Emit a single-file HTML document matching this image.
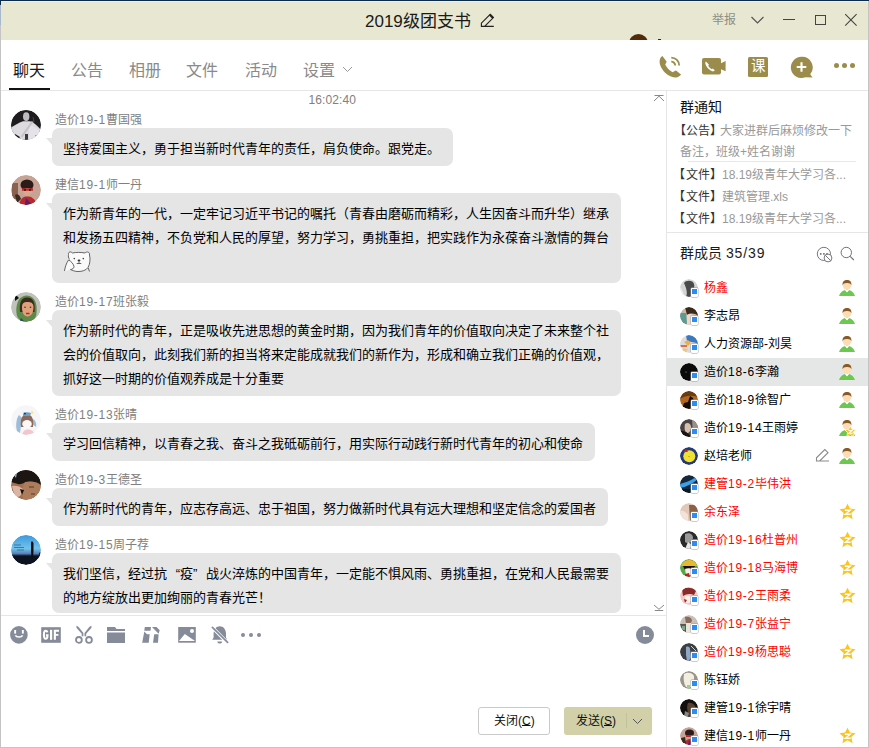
<!DOCTYPE html>
<html lang="zh-CN"><head><meta charset="utf-8">
<style>
*{margin:0;padding:0;box-sizing:border-box}
html,body{width:869px;height:748px;overflow:hidden;background:#c4c4c4}
body{font-family:"Liberation Sans",sans-serif;position:relative;color:#000}
.a{position:absolute}
.t{position:absolute;white-space:nowrap;line-height:1}
.tab{position:absolute;top:62.5px;font-size:16px;color:#8a8a8a;line-height:1;white-space:nowrap}
.bub{position:absolute;left:52px;background:#e5e5e5;border-radius:7px}
.tail{position:absolute;left:46px;width:7px;height:8px;background:#e5e5e5;clip-path:polygon(0 0,100% 0,100% 100%)}
.ln{position:absolute;left:63px;font-size:13px;line-height:1;white-space:nowrap;color:#000}
.nm{position:absolute;margin-top:.5px;left:55px;font-size:12px;color:#808080;line-height:1;white-space:nowrap}
.av{position:absolute;left:11px;width:30px;height:30px;border-radius:50%;overflow:hidden}
.mrow{position:absolute;left:667px;width:201px;height:28px}
.mav{position:absolute;left:13px;top:5px;width:18px;height:18px;border-radius:50%;overflow:hidden}
.mnm{position:absolute;left:37px;top:8.4px;font-size:12px;line-height:1;color:#000;white-space:nowrap}
.red{color:#f00}
.badge{position:absolute;left:24px;top:13.5px;width:7px;height:9px;background:#fff;border-radius:1px;box-shadow:0 0 0 .4px #999}
.badge:after{content:"";position:absolute;left:1px;top:1px;width:4.6px;height:5.6px;background:#2a8cf4}
.ico{position:absolute}
.br{color:#333}
.d{letter-spacing:.75px}
</style></head><body>
<div class="a" style="left:0;top:0;width:869px;height:1px;background:#0b2c4e"></div>
<div class="a" style="left:1px;top:1px;width:867px;height:746px;background:#fff"></div>
<!-- title bar -->
<div class="a" style="left:1px;top:1px;width:867px;height:39px;background:#e8e8d2;border-top-right-radius:3px"></div>
<div class="a" style="left:1px;top:1px;width:865px;height:1px;background:#f3f1da"></div>
<div class="a" style="left:0;top:1px;width:1px;height:4px;background:#10304a"></div><div class="a" style="left:0;top:5px;width:1px;height:20px;background:#a8b8cc"></div>
<div class="t" style="left:365px;top:13px;font-size:17px;color:#1a1a1a">2019级团支书</div>
<svg class="ico" style="left:476px;top:10px" width="24" height="22" viewBox="0 0 24 22"><path d="M5.4 16.4 V13.2 L14.2 4.4 L17.4 7.6 L8.6 16.4 Z M5.4 16.4 H17.8" fill="none" stroke="#222" stroke-width="1.15"/><path d="M13.8 4.8 L17 8" stroke="#222" stroke-width="2"/></svg>
<div class="t" style="left:712px;top:14px;font-size:12px;color:#8e8d83">举报</div>
<svg class="ico" style="left:750px;top:15px" width="15" height="10" viewBox="0 0 15 10"><path d="M1.5 2 L7.5 8 L13.5 2" fill="none" stroke="#555" stroke-width="1.2"/></svg>
<div class="a" style="left:783px;top:19px;width:12px;height:1px;background:#444"></div>
<div class="a" style="left:815px;top:15px;width:11px;height:10px;border:1.2px solid #444"></div>
<svg class="ico" style="left:844px;top:13px" width="14" height="14" viewBox="0 0 14 14"><path d="M1.2 1.2 L12.6 12.6 M12.6 1.2 L1.2 12.6" stroke="#444" stroke-width="1.1"/></svg>
<div class="a" style="left:629px;top:34px;width:19px;height:6px;overflow:hidden"><div style="width:19px;height:19px;border-radius:50%;background:#532a0a"></div></div>
<div class="a" style="left:658px;top:38.5px;width:2.5px;height:1.5px;background:#3a2a1a"></div>

<!-- tabs -->
<div class="tab" style="left:13px;color:#1a1a1a">聊天</div>
<div class="a" style="left:9px;top:88px;width:41px;height:2px;background:#111"></div>
<div class="tab" style="left:71px">公告</div>
<div class="tab" style="left:129px">相册</div>
<div class="tab" style="left:186px">文件</div>
<div class="tab" style="left:245px">活动</div>
<div class="tab" style="left:303px">设置</div>
<svg class="ico" style="left:342px;top:66px" width="11" height="7" viewBox="0 0 11 7"><path d="M1 1 L5.5 5.5 L10 1" fill="none" stroke="#999" stroke-width="1"/></svg>

<!-- tab icons -->
<svg class="ico" style="left:655px;top:52px" width="30" height="30" viewBox="0 0 30 30"><path d="M7.4 4 C5.4 5 4.4 7.5 4.6 10.5 C5.2 15 8.5 20 13 23 C16 25 19 25.8 21.5 25.4 C23.5 25 25.2 24 26 22.6 L21 18.6 C20 18.8 18.8 19.8 17.6 20.2 C14.6 18.8 11.6 15.8 10.2 12.6 C10.8 11.6 11.5 10.6 11.6 9.6 Z" fill="#9b8c4c"/><path d="M16.3 9.6 A3.9 3.9 0 0 1 20.2 13.5 M16.3 5.6 A7.9 7.9 0 0 1 24.2 13.5" fill="none" stroke="#9b8c4c" stroke-width="1.8"/></svg>
<svg class="ico" style="left:702px;top:58px" width="24" height="17" viewBox="0 0 24 17"><rect x="0" y="0" width="19" height="16.6" rx="2" fill="#9b8c4c"/><path d="M18.5 5.5 L23.6 3 V13.3 L18.5 11 Z" fill="#9b8c4c"/><path d="M4 3.6 C3 4.3 3 5.6 4 7.5 C5.5 10.3 7.6 12.3 10.2 13.3 C11.2 13.7 12.2 13.3 12.8 12.3 L10.8 10.6 L9.8 11.3 C8.3 10.6 7 9.3 6.2 7.8 L7 6.8 Z" fill="#fff"/></svg>
<div class="a" style="left:748px;top:57px;width:20px;height:20px;background:#9b8c4c;border-radius:1.5px"></div>
<div class="t" style="left:750.8px;top:59.2px;font-size:14.5px;color:#fff">课</div>
<svg class="ico" style="left:790px;top:56px" width="24" height="23" viewBox="0 0 24 23"><path d="M11.5 0.8 A10.6 10.6 0 1 0 15.5 21.2 L22.5 21.6 L20.2 18.2 A10.6 10.6 0 0 0 11.5 0.8 Z" fill="#9b8c4c"/><path d="M11.5 6.2 V15.8 M6.7 11 H16.3" stroke="#fff" stroke-width="2.1"/></svg>
<div class="a" style="left:834px;top:63px;width:5px;height:5px;border-radius:50%;background:#9b8c4c;box-shadow:8px 0 0 #9b8c4c,16px 0 0 #9b8c4c"></div>

<!-- dividers -->
<div class="a" style="left:1px;top:90px;width:867px;height:1px;background:#e6e6e6"></div>
<div class="a" style="left:666px;top:90px;width:1px;height:657px;background:#e6e6e6"></div>
<div class="a" style="left:1px;top:615px;width:665px;height:1px;background:#e6e6e6"></div>

<!-- chat -->
<div class="t" style="left:308.5px;top:94px;font-size:12px;color:#808080;letter-spacing:0.1px">16:02:40</div>
<svg class="ico" style="left:653px;top:94px" width="12" height="8" viewBox="0 0 12 8"><path d="M1.5 1.5 H10.5" stroke="#888" stroke-width="1"/><path d="M1 7 L6 2.2 L11 7" fill="none" stroke="#888" stroke-width="1"/></svg>

<!-- msg1 -->
<svg class="av" style="top:110px" width="30" height="30" viewBox="0 0 30 30"><clipPath id="c110"><circle cx="15" cy="15" r="15"/></clipPath><g clip-path="url(#c110)"><rect width="30" height="30" fill="#1e1c1e"/><path d="M0 30 V17.5 C3 15.5 8 12.5 12 11.2 H19 C23 12.5 27 16 30 20 V30 Z" fill="#dddbe0"/><path d="M18 14 L28 20 V30 H18 Z" fill="#e6e2ea"/><ellipse cx="15.2" cy="6.6" rx="3.2" ry="4.4" fill="#bdbbc0"/><path d="M10.5 27 L21.5 11.5" stroke="#c4c2c8" stroke-width="2"/><path d="M14 24 H17 V30 H14 Z" fill="#3a383c"/><path d="M4 24 L9 27 L7 30 L3 28 Z" fill="#1a181a"/><path d="M24.5 25 L27 27 L25 29 Z" fill="#1a181a"/><path d="M22 7 L23 12" stroke="#5a4030" stroke-width="1"/></g></svg>
<div class="nm" style="top:113px">造价<span class="d">19-1</span>曹国强</div>
<div class="bub" style="top:128px;width:401px;height:38px"></div>
<div class="tail" style="top:138px"></div>
<div class="ln" style="top:142px">坚持爱国主义，勇于担当新时代青年的责任，肩负使命。跟党走。</div>

<!-- msg2 -->
<svg class="av" style="top:175px" width="30" height="30" viewBox="0 0 30 30"><clipPath id="c175"><circle cx="15" cy="15" r="15"/></clipPath><g clip-path="url(#c175)"><circle cx="15" cy="15" r="15" fill="#c6a394"/><path d="M1 8 H7 V24 H1 Z" fill="#8a6050"/><ellipse cx="16" cy="10" rx="6.5" ry="5.5" fill="#2a1c1a"/><ellipse cx="16.5" cy="17" rx="4.5" ry="4" fill="#d8a890"/><path d="M11 14.5 H22" stroke="#c02828" stroke-width="2.6"/><circle cx="14" cy="15" r="1.1" fill="#222"/><circle cx="19" cy="15" r="1.1" fill="#222"/><path d="M8 30 C9 24 12 21.5 16 21.5 C20 21.5 24 23 26 30 Z" fill="#b8282e"/><path d="M15 23 L21 30 H14 Z" fill="#5a2070"/><path d="M4 20 C6 18 9 20 10 24 L6 28 Z" fill="#3a2a20"/></g></svg>
<div class="nm" style="top:178px">建信<span class="d">19-1</span>师一丹</div>
<div class="bub" style="top:193px;width:569px;height:90px"></div>
<div class="tail" style="top:203px"></div>
<div class="ln" style="top:207px">作为新青年的一代，一定牢记习近平书记的嘱托（青春由磨砺而精彩，人生因奋斗而升华）继承</div>
<div class="ln" style="top:231px">和发扬五四精神，不负党和人民的厚望，努力学习，勇挑重担，把实践作为永葆奋斗激情的舞台</div>
<svg class="ico" style="left:58px;top:246px" width="40" height="30" viewBox="0 0 40 30"><path d="M10.5 8.5 C10 6 12.5 5 14.5 7 C18 6.2 23 6.2 27 7 C29 5 32 6 31.5 9 C32.5 13 32 18 30 21.5 C28 24.5 24 25.5 20 25.5 C17 25.5 14.5 24.5 13 23.5 L6.5 25 C7 21 8.5 17 10.5 14 C10.3 12 10.2 10 10.5 8.5 Z" fill="#fafafa"/><path d="M10.5 8.5 C10 6 12.5 5 14.5 7 C18 6.2 23 6.2 27 7 C29 5 32 6 31.5 9 C32.5 13 32 18 30 21.5 C28 24.5 24 25.5 20 25.5 C17 25.5 14.5 24.5 12.5 23.5 M10.5 8.5 C10.2 10 10.5 12 11.5 13.5 M6.5 25 C7 21 8.5 17 10.5 14 C13 15 15.5 18 16 20.5 C16 22.5 14 23.5 12.5 23.5 M30.2 22 L31.5 25.5" fill="none" stroke="#555" stroke-width="0.9"/><circle cx="16.3" cy="12.6" r=".8" fill="#444"/><circle cx="25.3" cy="12.6" r=".8" fill="#444"/><ellipse cx="21" cy="14.6" rx="1.4" ry="1" fill="#333"/><path d="M18.7 17.5 H23.3 M21 15.5 V17.5" stroke="#444" stroke-width=".8"/></svg>

<!-- msg3 -->
<svg class="av" style="top:292px" width="30" height="30" viewBox="0 0 30 30"><clipPath id="c292"><circle cx="15" cy="15" r="15"/></clipPath><g clip-path="url(#c292)"><circle cx="15" cy="15" r="15" fill="#c2c2bc"/><path d="M6 24 C4 16 6 4 15.5 3.5 C25 4 27 14 25 24 C23 29 19 30 15.5 30 C12 30 8 29 6 24 Z" fill="#5c8a48"/><path d="M9 20 C8 11 10 5.5 16 5.5 C22 5.5 24.5 10 23.5 20 Z" fill="#3a2a20"/><path d="M11 15 C11 11 13 10 16.5 10 C20 10 22.5 11 22.5 15 C22.5 21 20 24.5 16.5 24.5 C13 24.5 11 21 11 15 Z" fill="#e0a07c"/><path d="M15 21.5 H18.5" stroke="#b02a2a" stroke-width="1.3"/><circle cx="14" cy="15.2" r=".8" fill="#332"/><circle cx="19.5" cy="15.2" r=".8" fill="#332"/><path d="M4 2 L8 6 L4 9 Z" fill="#111"/><path d="M10 26 L14 30 L8 30 Z" fill="#2a4a6a"/></g></svg>
<div class="nm" style="top:295px">造价<span class="d">19-17</span>班张毅</div>
<div class="bub" style="top:310px;width:569px;height:86px"></div>
<div class="tail" style="top:320px"></div>
<div class="ln" style="top:324px">作为新时代的青年，正是吸收先进思想的黄金时期，因为我们青年的价值取向决定了未来整个社</div>
<div class="ln" style="top:348px">会的价值取向，此刻我们新的担当将来定能成就我们的新作为，形成和确立我们正确的价值观，</div>
<div class="ln" style="top:372px">抓好这一时期的价值观养成是十分重要</div>

<!-- msg4 -->
<svg class="av" style="top:405px" width="30" height="30" viewBox="0 0 30 30"><clipPath id="c405"><circle cx="15" cy="15" r="15"/></clipPath><g clip-path="url(#c405)"><circle cx="15" cy="15" r="15" fill="#f6f6f8"/><path d="M6 26 C4 20 6 12 8 10 L11 13 L9 28 Z" fill="#9cbcd8"/><path d="M25 22 C26 18 24 15 22 14 L20 18 Z" fill="#9cbcd8"/><path d="M10 22 C9 14 11 9.5 16 9.5 C21 9.5 23 14 22 22 Z" fill="#8a6a5a"/><path d="M12 9 C13 7 17 6.5 20 8 L19 11 H12 Z" fill="#6aa0c8"/><path d="M12.5 7.5 L15 8 L14 10 Z" fill="#0a3060"/><ellipse cx="16" cy="19" rx="4.8" ry="4" fill="#fdf8f6"/><path d="M11 30 C12 26 14 24.5 17 24.5 C20 24.5 23 26 24 30 Z" fill="#f4c6cc"/><path d="M21 5 L22 7 L24 7.5 L22 8 L21 10 L20 8 L18 7.5 L20 7 Z" fill="#f4e4a8"/></g></svg>
<div class="nm" style="top:408px">造价<span class="d">19-13</span>张晴</div>
<div class="bub" style="top:423px;width:543px;height:38px"></div>
<div class="tail" style="top:433px"></div>
<div class="ln" style="top:437px">学习回信精神，以青春之我、奋斗之我砥砺前行，用实际行动践行新时代青年的初心和使命</div>

<!-- msg5 -->
<svg class="av" style="top:470px" width="30" height="30" viewBox="0 0 30 30"><clipPath id="c470"><circle cx="15" cy="15" r="15"/></clipPath><g clip-path="url(#c470)"><circle cx="15" cy="15" r="15" fill="#a07050"/><path d="M0 0 H30 V15 C27 12 22 11 16 12 C12 13 9 15 7 14 L0 12 Z" fill="#1c1612"/><path d="M14 12 C20 10.5 27 12 30 16 V30 H12 C11 24 11 16 14 12 Z" fill="#ac7c5c"/><path d="M1 16 C4 15 9 16 12 19 C12 23 10 26 7 27 C4 26 2 22 1 16 Z" fill="#dcb4a4"/><path d="M9 19 L13 20 L11 25 Z" fill="#151010"/><path d="M18 17 H23 M20 24 H24" stroke="#5a3a28" stroke-width="1"/><path d="M2 4 L6 3 L5 8 Z" fill="#88a8c8"/></g></svg>
<div class="nm" style="top:473px">造价<span class="d">19-3</span>王德圣</div>
<div class="bub" style="top:488px;width:556px;height:38px"></div>
<div class="tail" style="top:498px"></div>
<div class="ln" style="top:502px">作为新时代的青年，应志存高远、忠于祖国，努力做新时代具有远大理想和坚定信念的爱国者</div>

<!-- msg6 -->
<svg class="av" style="top:535px" width="30" height="30" viewBox="0 0 30 30"><clipPath id="c535"><circle cx="15" cy="15" r="15"/></clipPath><g clip-path="url(#c535)"><defs><linearGradient id="g6" x1="0" y1="0" x2="0" y2="1"><stop offset="0" stop-color="#3c98dc"/><stop offset=".45" stop-color="#70c4ec"/><stop offset=".62" stop-color="#5a80b8"/><stop offset=".7" stop-color="#0c1220"/></linearGradient></defs><circle cx="15" cy="15" r="15" fill="url(#g6)"/><path d="M20.2 7 C20.2 6 21.8 6 21.8 7 L22.5 8 V16 L22 23 H20.5 L20 16 V8 Z" fill="#0a0e14"/><path d="M3 10 H10 M3 12.5 H13 M6 15 H13" stroke="#305878" stroke-width=".7"/><path d="M28 18 L29.5 17 L30 24 L27.5 24 Z" fill="#3a1a2a"/></g></svg>
<div class="nm" style="top:538px">造价<span class="d">19-15</span>周子荐</div>
<div class="bub" style="top:553px;width:569px;height:60px"></div>
<div class="tail" style="top:563px"></div>
<div class="ln" style="top:567px">我们坚信，经过抗<span style="display:inline-block;width:13px;text-align:right">“</span>疫<span style="display:inline-block;width:13px">”</span>战火淬炼的中国青年，一定能不惧风雨、勇挑重担，在党和人民最需要</div>
<div class="ln" style="top:591px">的地方绽放出更加绚丽的青春光芒！</div>
<svg class="ico" style="left:653px;top:603px" width="12" height="9" viewBox="0 0 12 9"><path d="M1.8 7.5 H10.2" stroke="#888" stroke-width="1"/><path d="M1 2 L6 6.3 L11 2" fill="none" stroke="#888" stroke-width="1"/></svg>

<!-- toolbar -->
<svg class="ico" style="left:8px;top:622px" width="24" height="24" viewBox="0 0 24 24"><circle cx="10.9" cy="12.9" r="8.8" fill="#868b9a"/><rect x="6.2" y="8" width="1.9" height="3.6" fill="#fff"/><rect x="13.9" y="8" width="1.9" height="3.6" fill="#fff"/><path d="M7.4 13.4 C8.5 15.6 13.5 15.6 14.6 13.4" fill="none" stroke="#fff" stroke-width="1.6"/></svg>
<svg class="ico" style="left:41px;top:627px" width="20" height="16" viewBox="0 0 20 16"><rect width="19.6" height="15.6" x=".2" y=".2" fill="#868b9a"/><path d="M6.5 5.4 C6.1 4.3 5.5 3.8 4.7 3.8 C3.4 3.8 2.9 5.5 2.9 7.8 C2.9 10.1 3.4 11.8 4.7 11.8 C5.9 11.8 6.5 10.7 6.5 9.1 V8.2 H4.9" fill="none" stroke="#fff" stroke-width="2"/><rect x="9" y="2.8" width="2.2" height="10" fill="#fff"/><path d="M12.8 2.8 H18 V4.8 H14.9 V6.9 H17.4 V8.8 H14.9 V12.8 H12.8 Z" fill="#fff"/></svg>
<svg class="ico" style="left:72px;top:622px" width="24" height="24" viewBox="0 0 24 24"><path d="M4.6 3.8 C5.6 4.2 6.4 4.8 7 5.6 L11.4 11 V14.3 H9.7 V11.8 L4.6 6 C4.3 5.2 4.3 4.4 4.6 3.8 Z M19.3 3.8 C18.3 4.2 17.5 4.8 16.9 5.6 L12.5 11 V14.3 H14.2 V11.8 L19.3 6 C19.6 5.2 19.6 4.4 19.3 3.8 Z" fill="#868b9a"/><circle cx="6.9" cy="17.9" r="2.9" fill="none" stroke="#868b9a" stroke-width="1.8"/><circle cx="17" cy="17.9" r="2.9" fill="none" stroke="#868b9a" stroke-width="1.8"/></svg>
<svg class="ico" style="left:107px;top:627px" width="18" height="16" viewBox="0 0 18 16"><path d="M0 0 H8 L9.5 2 H18 V4 H0 Z M0 5.5 H18 V16 H0 Z" fill="#868b9a"/></svg>
<svg class="ico" style="left:140px;top:624px" width="22" height="22" viewBox="0 0 22 22"><path d="M4.8 3 H11 L10.5 6.8 H4.3 Z M12 3 H16.5 L19.7 6.2 L18.6 9.8 Z M4.3 7.4 L7 10.3 H9.7 L8.7 18.7 H2.2 Z M14.2 10.3 H18.6 L18 18.7 H13 Z" fill="#868b9a"/></svg>
<svg class="ico" style="left:176px;top:624px" width="22" height="22" viewBox="0 0 22 22"><rect x="2.2" y="3" width="17.6" height="15.7" fill="#868b9a"/><path d="M3 17 L8.8 10 L19 16.9 Z" fill="#fff"/><circle cx="16" cy="7" r="2" fill="#fff"/></svg>
<svg class="ico" style="left:209px;top:623px" width="22" height="24" viewBox="0 0 22 24"><path d="M3.2 16.8 L4.6 14.6 V10.5 C4.8 5.8 7.5 3.3 10.8 3.2 C14.2 3.3 16.8 5.8 17 10.5 V14.6 L18.2 16.8 Z" fill="#868b9a"/><path d="M8.3 18.6 H13.2 C13 20 12 20.6 10.75 20.6 C9.5 20.6 8.5 20 8.3 18.6 Z" fill="#868b9a"/><path d="M2.3 3.4 L19 20.2" stroke="#fff" stroke-width="3.4"/><path d="M3.4 4.4 L18.6 19.3" stroke="#868b9a" stroke-width="1.7" stroke-linecap="round"/></svg>
<div class="a" style="left:241px;top:633px;width:4px;height:4px;border-radius:50%;background:#868b9a;box-shadow:8px 0 0 #868b9a,16px 0 0 #868b9a"></div>
<svg class="ico" style="left:636px;top:626px" width="18" height="18" viewBox="0 0 18 18"><circle cx="9" cy="9" r="9" fill="#868b9a"/><path d="M8 4 V10 H13" fill="none" stroke="#fff" stroke-width="2"/></svg>

<!-- buttons -->
<div class="a" style="left:478px;top:707px;width:72px;height:28px;border:1px solid #cacaca;border-radius:3px;background:#fff"></div>
<div class="t" style="left:494px;top:715px;font-size:12px;color:#111">关闭(<u style="text-underline-offset:0">C</u>)</div>
<div class="a" style="left:564px;top:707px;width:88px;height:28px;border-radius:3px;background:#d2d0a8"></div>
<div class="t" style="left:576px;top:715px;font-size:12px;color:#111">发送(<u style="text-underline-offset:0">S</u>)</div>
<div class="a" style="left:626px;top:713px;width:1px;height:15px;background:#c4c29c"></div>
<svg class="ico" style="left:632px;top:718px" width="11" height="7" viewBox="0 0 11 7"><path d="M1 1 L5.5 5.5 L10 1" fill="none" stroke="#555" stroke-width="1"/></svg>

<!-- right panel -->
<div class="t" style="left:680px;top:100px;font-size:14px;color:#111">群通知</div>
<div class="t" style="left:673.5px;top:125px;font-size:12px;color:#999"><span class="br">【公告<span style="margin-right:-2px">】</span></span>大家进群后麻烦修改一下</div>
<div class="t" style="left:680px;top:145.5px;font-size:12px;color:#999">备注，班级+姓名谢谢</div>
<div class="a" style="left:688px;top:161px;width:168px;height:1px;background:#e3e7ee"></div>
<div class="t" style="left:673px;top:169px;font-size:12px;color:#999"><span class="br">【<span style="margin-left:1px">文件】</span></span>18.19级青年大学习各...</div>
<div class="t" style="left:673px;top:191px;font-size:12px;color:#999"><span class="br">【<span style="margin-left:1px">文件】</span></span>建筑管理.xls</div>
<div class="t" style="left:673px;top:212.5px;font-size:12px;color:#999"><span class="br">【<span style="margin-left:1px">文件】</span></span>18.19级青年大学习各...</div>
<div class="a" style="left:667px;top:232px;width:201px;height:1px;background:#e6e6e6"></div>
<div class="t" style="left:680px;top:246px;font-size:14px;color:#1a1a1a">群成员 <span style="letter-spacing:0.9px">35/39</span></div>
<svg class="ico" style="left:812px;top:242px" width="48" height="24" viewBox="0 0 48 24"><circle cx="11.9" cy="11.9" r="6.6" fill="none" stroke="#76767c" stroke-width="1"/><rect x="7.9" y="11.1" width="1.6" height="1.6" fill="#6a6a70"/><rect x="11.1" y="11.1" width="1.6" height="1.6" fill="#6a6a70"/><rect x="14.2" y="11.1" width="1.6" height="1.6" fill="#6a6a70"/><circle cx="16" cy="16" r="3.9" fill="#fff" stroke="#76767c" stroke-width="1"/><path d="M13.3 13.3 L18.7 18.7" stroke="#76767c" stroke-width="1"/><circle cx="34.3" cy="10.5" r="5.2" fill="none" stroke="#70707a" stroke-width="1"/><path d="M38.2 14.4 L41.8 18" stroke="#70707a" stroke-width="1.1"/></svg>


<div id="members">
<div class="mrow" style="top:274px;"><svg class="mav" width="18" height="18" viewBox="0 0 18 18"><clipPath id="m0"><circle cx="9" cy="9" r="9"/></clipPath><g clip-path="url(#m0)"><rect width="18" height="18" fill="#d4d4d4"/><path d="M4 4 C6 1 13 1 14 5 C15 9 13 14 11 18 H6 C8 13 6 9 4 4 Z" fill="#4a4a4a"/><path d="M0 8 C2 10 3 14 5 18 H0 Z" fill="#f0f0f0"/></g></svg><div class="badge"></div><div class="mnm red">杨鑫</div><svg class="ico" style="left:172px;top:6px" width="16" height="16" viewBox="0 0 16 16"><path d="M0 16 C1 12.5 3.5 10.5 6 10 L8 12 L10 10 C12.5 10.5 15 12.5 16 16 Z" fill="#6cc84f"/><path d="M6 10 L8 12.5 L10 10 L9.2 9 H6.8 Z" fill="#fff"/><rect x="6.8" y="8" width="2.4" height="2" fill="#f9d8b4"/><ellipse cx="8" cy="5" rx="4.3" ry="4.6" fill="#fbdcb6"/><path d="M3.6 5.2 C3.2 1.8 5.2 0 8 0 C10.8 0 12.8 1.8 12.4 5.2 C11.8 3.6 10.5 2.8 8 2.9 C5.5 2.8 4.2 3.6 3.6 5.2 Z" fill="#8a5a26"/></svg></div>
<div class="mrow" style="top:302px;"><svg class="mav" width="18" height="18" viewBox="0 0 18 18"><clipPath id="m1"><circle cx="9" cy="9" r="9"/></clipPath><g clip-path="url(#m1)"><rect width="18" height="18" fill="#c8b8a8"/><path d="M0 6 H6 L7 18 H0 Z" fill="#5c9a94"/><path d="M5 0 H18 V9 C15 6 10 6 7 8 Z" fill="#3a2a1e"/><path d="M7 8 C10 6 14 7 15 10 L13 18 H7 Z" fill="#ecd8c8"/></g></svg><div class="badge"></div><div class="mnm">李志昂</div><svg class="ico" style="left:172px;top:6px" width="16" height="16" viewBox="0 0 16 16"><path d="M0 16 C1 12.5 3.5 10.5 6 10 L8 12 L10 10 C12.5 10.5 15 12.5 16 16 Z" fill="#6cc84f"/><path d="M6 10 L8 12.5 L10 10 L9.2 9 H6.8 Z" fill="#fff"/><rect x="6.8" y="8" width="2.4" height="2" fill="#f9d8b4"/><ellipse cx="8" cy="5" rx="4.3" ry="4.6" fill="#fbdcb6"/><path d="M3.6 5.2 C3.2 1.8 5.2 0 8 0 C10.8 0 12.8 1.8 12.4 5.2 C11.8 3.6 10.5 2.8 8 2.9 C5.5 2.8 4.2 3.6 3.6 5.2 Z" fill="#8a5a26"/></svg></div>
<div class="mrow" style="top:330px;"><svg class="mav" width="18" height="18" viewBox="0 0 18 18"><clipPath id="m2"><circle cx="9" cy="9" r="9"/></clipPath><g clip-path="url(#m2)"><rect width="18" height="18" fill="#dcdce0"/><path d="M6 0 H18 V9 C15 7 10 7 7 6 Z" fill="#3a78c0"/><path d="M4 7 L8 5 L11 8 L8 11 Z" fill="#f0b040"/><path d="M0 10 H7 V12 H0 Z" fill="#d87050"/><path d="M3 13 L8 14 L6 18 H2 Z" fill="#e8c888"/></g></svg><div class="badge"></div><div class="mnm">人力资源部-刘昊</div><svg class="ico" style="left:172px;top:6px" width="16" height="16" viewBox="0 0 16 16"><path d="M0 16 C1 12.5 3.5 10.5 6 10 L8 12 L10 10 C12.5 10.5 15 12.5 16 16 Z" fill="#6cc84f"/><path d="M6 10 L8 12.5 L10 10 L9.2 9 H6.8 Z" fill="#fff"/><rect x="6.8" y="8" width="2.4" height="2" fill="#f9d8b4"/><ellipse cx="8" cy="5" rx="4.3" ry="4.6" fill="#fbdcb6"/><path d="M3.6 5.2 C3.2 1.8 5.2 0 8 0 C10.8 0 12.8 1.8 12.4 5.2 C11.8 3.6 10.5 2.8 8 2.9 C5.5 2.8 4.2 3.6 3.6 5.2 Z" fill="#8a5a26"/></svg></div>
<div class="mrow" style="top:358px;background:#e5e7e6;"><svg class="mav" width="18" height="18" viewBox="0 0 18 18"><clipPath id="m3"><circle cx="9" cy="9" r="9"/></clipPath><g clip-path="url(#m3)"><rect width="18" height="18" fill="#0a0a0a"/><circle cx="6" cy="9" r=".6" fill="#aa8"/></g></svg><div class="badge"></div><div class="mnm">造价<span class=d>18-6</span>李瀚</div><svg class="ico" style="left:172px;top:6px" width="16" height="16" viewBox="0 0 16 16"><path d="M0 16 C1 12.5 3.5 10.5 6 10 L8 12 L10 10 C12.5 10.5 15 12.5 16 16 Z" fill="#6cc84f"/><path d="M6 10 L8 12.5 L10 10 L9.2 9 H6.8 Z" fill="#fff"/><rect x="6.8" y="8" width="2.4" height="2" fill="#f9d8b4"/><ellipse cx="8" cy="5" rx="4.3" ry="4.6" fill="#fbdcb6"/><path d="M3.6 5.2 C3.2 1.8 5.2 0 8 0 C10.8 0 12.8 1.8 12.4 5.2 C11.8 3.6 10.5 2.8 8 2.9 C5.5 2.8 4.2 3.6 3.6 5.2 Z" fill="#8a5a26"/></svg></div>
<div class="mrow" style="top:386px;"><svg class="mav" width="18" height="18" viewBox="0 0 18 18"><clipPath id="m4"><circle cx="9" cy="9" r="9"/></clipPath><g clip-path="url(#m4)"><rect width="18" height="18" fill="#b06820"/><path d="M0 0 H18 V6 C12 4 6 4 0 8 Z" fill="#6a3a10"/><path d="M2 18 L4 12 L8 11 L10 5 L13 7 L14 12 L18 12 V18 Z" fill="#140c06"/></g></svg><div class="badge"></div><div class="mnm">造价<span class=d>18-9</span>徐智广</div><svg class="ico" style="left:172px;top:6px" width="16" height="16" viewBox="0 0 16 16"><path d="M0 16 C1 12.5 3.5 10.5 6 10 L8 12 L10 10 C12.5 10.5 15 12.5 16 16 Z" fill="#6cc84f"/><path d="M6 10 L8 12.5 L10 10 L9.2 9 H6.8 Z" fill="#fff"/><rect x="6.8" y="8" width="2.4" height="2" fill="#f9d8b4"/><ellipse cx="8" cy="5" rx="4.3" ry="4.6" fill="#fbdcb6"/><path d="M3.6 5.2 C3.2 1.8 5.2 0 8 0 C10.8 0 12.8 1.8 12.4 5.2 C11.8 3.6 10.5 2.8 8 2.9 C5.5 2.8 4.2 3.6 3.6 5.2 Z" fill="#8a5a26"/></svg></div>
<div class="mrow" style="top:414px;"><svg class="mav" width="18" height="18" viewBox="0 0 18 18"><clipPath id="m5"><circle cx="9" cy="9" r="9"/></clipPath><g clip-path="url(#m5)"><rect width="18" height="18" fill="#4a4444"/><path d="M12 0 H18 V18 H13 Z" fill="#9a9088"/><path d="M5 5 C7 3 11 4 11 8 C11 12 9 14 7 14 C5 13 4 10 5 5 Z" fill="#d8c0b0"/><path d="M0 12 C3 11 8 13 11 18 H0 Z" fill="#1a1414"/></g></svg><div class="badge"></div><div class="mnm">造价<span class=d>19-14</span>王雨婷</div><svg class="ico" style="left:172px;top:6px" width="16" height="16" viewBox="0 0 16 16"><path d="M0 16 C1 12.5 3.5 10.5 6 10 L8 12 L10 10 C12.5 10.5 15 12.5 16 16 Z" fill="#6cc84f"/><path d="M6 10 L8 12.5 L10 10 L9.2 9 H6.8 Z" fill="#fff"/><rect x="6.8" y="8" width="2.4" height="2" fill="#f9d8b4"/><ellipse cx="8" cy="5" rx="4.3" ry="4.6" fill="#fbdcb6"/><path d="M3.6 5.2 C3.2 1.8 5.2 0 8 0 C10.8 0 12.8 1.8 12.4 5.2 C11.8 3.6 10.5 2.8 8 2.9 C5.5 2.8 4.2 3.6 3.6 5.2 Z" fill="#8a5a26"/></svg><svg class="ico" style="left:177px;top:11px" width="12.5" height="12" viewBox="-0.5 -0.5 17 16"><path d="M8 0.6 L10.3 5.2 L15.6 5.9 L11.6 9.5 L12.8 15.2 L8 12.4 L3.2 15.2 L4.4 9.5 L0.4 5.9 L5.7 5.2 Z" fill="#fdc41a" stroke="#fff" stroke-width="0.9" stroke-linejoin="round"/><path d="M5.5 6.8 H10.5 L6 10.6 H11" fill="none" stroke="#fff" stroke-width="1.4"/></svg></div>
<div class="mrow" style="top:442px;"><svg class="mav" width="18" height="18" viewBox="0 0 18 18"><clipPath id="m6"><circle cx="9" cy="9" r="9"/></clipPath><g clip-path="url(#m6)"><rect width="18" height="18" fill="#243a78"/><circle cx="9.3" cy="9.3" r="6" fill="#f0e030"/><path d="M3 5 L6 2 L8 5 Z" fill="#d02020"/><circle cx="9" cy="9.5" r=".6" fill="#a08010"/></g></svg><div class="mnm">赵培老师</div><svg class="ico" style="left:147.5px;top:6.3px" width="15" height="14" viewBox="0 0 15 14"><path d="M1.5 13 V9.8 L9.8 1.5 L13 4.7 L4.7 13 Z M1 13 H14" fill="none" stroke="#8a8a8a" stroke-width="1.1"/></svg><svg class="ico" style="left:172px;top:6px" width="16" height="16" viewBox="0 0 16 16"><path d="M0 16 C1 12.5 3.5 10.5 6 10 L8 12 L10 10 C12.5 10.5 15 12.5 16 16 Z" fill="#6cc84f"/><path d="M6 10 L8 12.5 L10 10 L9.2 9 H6.8 Z" fill="#fff"/><rect x="6.8" y="8" width="2.4" height="2" fill="#f9d8b4"/><ellipse cx="8" cy="5" rx="4.3" ry="4.6" fill="#fbdcb6"/><path d="M3.6 5.2 C3.2 1.8 5.2 0 8 0 C10.8 0 12.8 1.8 12.4 5.2 C11.8 3.6 10.5 2.8 8 2.9 C5.5 2.8 4.2 3.6 3.6 5.2 Z" fill="#8a5a26"/></svg></div>
<div class="mrow" style="top:470px;"><svg class="mav" width="18" height="18" viewBox="0 0 18 18"><clipPath id="m7"><circle cx="9" cy="9" r="9"/></clipPath><g clip-path="url(#m7)"><rect width="18" height="18" fill="#14283e"/><path d="M0 9 C4 8 10 6 16 2 L18 4 C12 9 6 12 0 13 Z" fill="#3aa0e8"/><path d="M0 14 H18 V18 H0 Z" fill="#0a1828"/></g></svg><div class="badge"></div><div class="mnm red">建管<span class=d>19-2</span>毕伟洪</div></div>
<div class="mrow" style="top:498px;"><svg class="mav" width="18" height="18" viewBox="0 0 18 18"><clipPath id="m8"><circle cx="9" cy="9" r="9"/></clipPath><g clip-path="url(#m8)"><rect width="18" height="18" fill="#e2c8b8"/><path d="M9 2 H18 V18 H10 Z" fill="#8a6048"/><path d="M0 8 C3 7 6 9 8 12 V18 H0 Z" fill="#f2e2d8"/></g></svg><div class="badge"></div><div class="mnm red">余东泽</div><svg class="ico" style="left:171.5px;top:5.2px" width="17" height="17" viewBox="0 0 16 16"><path d="M8 0.6 L10.3 5.2 L15.6 5.9 L11.6 9.5 L12.8 15.2 L8 12.4 L3.2 15.2 L4.4 9.5 L0.4 5.9 L5.7 5.2 Z" fill="#fdc41a"/><path d="M5.5 6.8 H10.5 L6 10.6 H11" fill="none" stroke="#fff" stroke-width="1.3"/></svg></div>
<div class="mrow" style="top:526px;"><svg class="mav" width="18" height="18" viewBox="0 0 18 18"><clipPath id="m9"><circle cx="9" cy="9" r="9"/></clipPath><g clip-path="url(#m9)"><rect width="18" height="18" fill="#2a2a2a"/><path d="M5 3 C9 1 13 3 13 7 C12 12 8 13 5 11 Z" fill="#9a9a9a"/><path d="M8 11 L12 14 L10 18 H5 Z" fill="#e8e8e8"/><path d="M13 8 H18 V14 H13 Z" fill="#6a6a6a"/></g></svg><div class="badge"></div><div class="mnm red">造价<span class=d>19-16</span>杜普州</div><svg class="ico" style="left:171.5px;top:5.2px" width="17" height="17" viewBox="0 0 16 16"><path d="M8 0.6 L10.3 5.2 L15.6 5.9 L11.6 9.5 L12.8 15.2 L8 12.4 L3.2 15.2 L4.4 9.5 L0.4 5.9 L5.7 5.2 Z" fill="#fdc41a"/><path d="M5.5 6.8 H10.5 L6 10.6 H11" fill="none" stroke="#fff" stroke-width="1.3"/></svg></div>
<div class="mrow" style="top:554px;"><svg class="mav" width="18" height="18" viewBox="0 0 18 18"><clipPath id="m10"><circle cx="9" cy="9" r="9"/></clipPath><g clip-path="url(#m10)"><rect width="18" height="18" fill="#58a848"/><path d="M1 7 C2 3 6 1 9 1 C13 1 16 3 17 7 Z" fill="#e8b830"/><path d="M3 7 H15 L13 11 H5 Z" fill="#1a1010"/><path d="M5 10 C7 9 11 9 13 11 L11 16 H6 Z" fill="#f8f0e8"/><path d="M5 15 L9 14 L10 18 H5 Z" fill="#c02020"/></g></svg><div class="badge"></div><div class="mnm red">造价<span class=d>19-18</span>马海博</div><svg class="ico" style="left:171.5px;top:5.2px" width="17" height="17" viewBox="0 0 16 16"><path d="M8 0.6 L10.3 5.2 L15.6 5.9 L11.6 9.5 L12.8 15.2 L8 12.4 L3.2 15.2 L4.4 9.5 L0.4 5.9 L5.7 5.2 Z" fill="#fdc41a"/><path d="M5.5 6.8 H10.5 L6 10.6 H11" fill="none" stroke="#fff" stroke-width="1.3"/></svg></div>
<div class="mrow" style="top:582px;"><svg class="mav" width="18" height="18" viewBox="0 0 18 18"><clipPath id="m11"><circle cx="9" cy="9" r="9"/></clipPath><g clip-path="url(#m11)"><rect width="18" height="18" fill="#f4c8c4"/><path d="M2 2 C6 0 13 0 16 4 L14 8 C10 6 6 7 3 9 Z" fill="#8a2a2a"/><path d="M5 9 C8 8 11 9 12 12 L9 16 H5 Z" fill="#fff0ec"/><path d="M4 12 L7 13 L5 16 Z" fill="#a02020"/></g></svg><div class="badge"></div><div class="mnm red">造价<span class=d>19-2</span>王雨柔</div><svg class="ico" style="left:171.5px;top:5.2px" width="17" height="17" viewBox="0 0 16 16"><path d="M8 0.6 L10.3 5.2 L15.6 5.9 L11.6 9.5 L12.8 15.2 L8 12.4 L3.2 15.2 L4.4 9.5 L0.4 5.9 L5.7 5.2 Z" fill="#fdc41a"/><path d="M5.5 6.8 H10.5 L6 10.6 H11" fill="none" stroke="#fff" stroke-width="1.3"/></svg></div>
<div class="mrow" style="top:610px;"><svg class="mav" width="18" height="18" viewBox="0 0 18 18"><clipPath id="m12"><circle cx="9" cy="9" r="9"/></clipPath><g clip-path="url(#m12)"><rect width="18" height="18" fill="#c8c0b8"/><path d="M5 2 C9 1 12 3 12 6 L10 9 H6 Z" fill="#8a6a58"/><path d="M0 9 H6 L7 18 H0 Z" fill="#5a5850"/><path d="M6 8 H11 L12 18 H6 Z" fill="#eae4dc"/><path d="M2 11 H5 V15 H2 Z" fill="#7aa888"/></g></svg><div class="badge"></div><div class="mnm red">造价<span class=d>19-7</span>张益宁</div></div>
<div class="mrow" style="top:638px;"><svg class="mav" width="18" height="18" viewBox="0 0 18 18"><clipPath id="m13"><circle cx="9" cy="9" r="9"/></clipPath><g clip-path="url(#m13)"><rect width="18" height="18" fill="#3c4044"/><path d="M6 4 C8 3 10 4 10 6 L11 14 L9 18 H7 L6 12 Z" fill="#90a8c8"/><path d="M11 3 L16 8" stroke="#c8d0d8" stroke-width="1"/></g></svg><div class="badge"></div><div class="mnm red">造价<span class=d>19-9</span>杨思聪</div><svg class="ico" style="left:171.5px;top:5.2px" width="17" height="17" viewBox="0 0 16 16"><path d="M8 0.6 L10.3 5.2 L15.6 5.9 L11.6 9.5 L12.8 15.2 L8 12.4 L3.2 15.2 L4.4 9.5 L0.4 5.9 L5.7 5.2 Z" fill="#fdc41a"/><path d="M5.5 6.8 H10.5 L6 10.6 H11" fill="none" stroke="#fff" stroke-width="1.3"/></svg></div>
<div class="mrow" style="top:666px;"><svg class="mav" width="18" height="18" viewBox="0 0 18 18"><clipPath id="m14"><circle cx="9" cy="9" r="9"/></clipPath><g clip-path="url(#m14)"><rect width="18" height="18" fill="#9a948c"/><path d="M4 3 C7 1 12 1 14 5 V14 C12 16 9 17 6 16 C4 13 3 8 4 3 Z" fill="#f2eee0"/><path d="M7 14 H10 V18 H7 Z" fill="#9ad08a"/></g></svg><div class="badge"></div><div class="mnm">陈钰娇</div></div>
<div class="mrow" style="top:694px;"><svg class="mav" width="18" height="18" viewBox="0 0 18 18"><clipPath id="m15"><circle cx="9" cy="9" r="9"/></clipPath><g clip-path="url(#m15)"><rect width="18" height="18" fill="#141010"/><path d="M8 4 C12 3 16 6 16 11 L14 18 H9 C8 13 6 9 8 4 Z" fill="#5a4030"/><path d="M5 12 L9 14 L8 18 H4 Z" fill="#8a8888"/></g></svg><div class="badge"></div><div class="mnm">建管<span class=d>19-1</span>徐宇晴</div></div>
<div class="mrow" style="top:722px;"><svg class="mav" width="18" height="18" viewBox="0 0 18 18"><clipPath id="m16"><circle cx="9" cy="9" r="9"/></clipPath><g clip-path="url(#m16)"><rect width="18" height="18" fill="#c6a394"/><ellipse cx="9.5" cy="6" rx="4.5" ry="3.5" fill="#2a1c1a"/><path d="M6 9 H13" stroke="#c02828" stroke-width="1.8"/><path d="M4 18 C5 14 7 12 9.5 12 C12 12 14 14 15 18 Z" fill="#b8282e"/><path d="M9 13 L13 18 H8 Z" fill="#5a2070"/><path d="M1 11 L5 10 L6 16 L2 16 Z" fill="#3a2a20"/></g></svg><div class="badge"></div><div class="mnm">建信<span class=d>19-1</span>师一丹</div><svg class="ico" style="left:171.5px;top:5.2px" width="17" height="17" viewBox="0 0 16 16"><path d="M8 0.6 L10.3 5.2 L15.6 5.9 L11.6 9.5 L12.8 15.2 L8 12.4 L3.2 15.2 L4.4 9.5 L0.4 5.9 L5.7 5.2 Z" fill="#fdc41a"/><path d="M5.5 6.8 H10.5 L6 10.6 H11" fill="none" stroke="#fff" stroke-width="1.3"/></svg></div>
</div><!--members-end-->
</body></html>
